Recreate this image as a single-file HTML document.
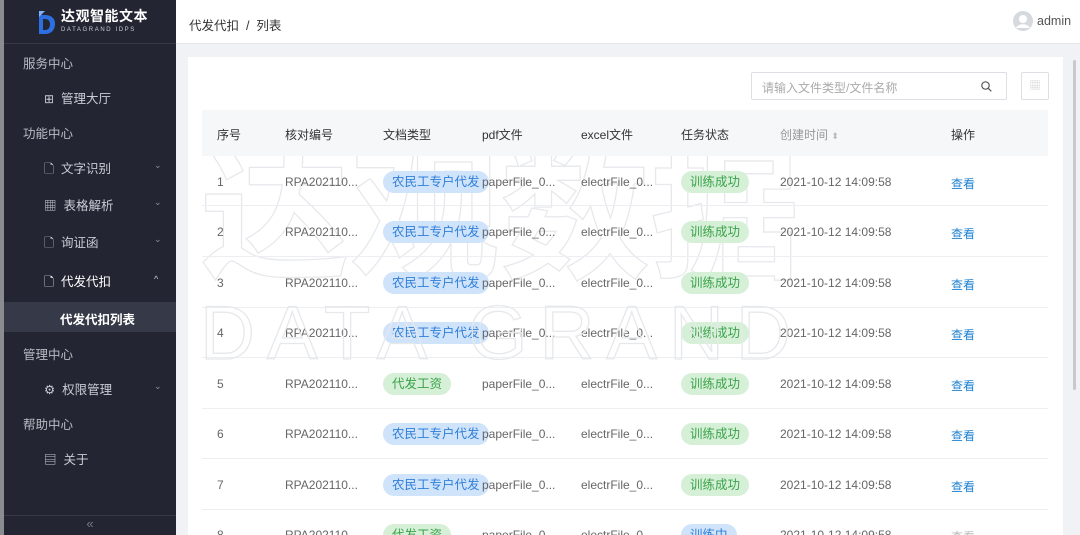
<!DOCTYPE html>
<html><head><meta charset="utf-8"><style>
*{margin:0;padding:0;box-sizing:border-box}
html,body{width:1080px;height:535px;overflow:hidden}
body{font-family:"Liberation Sans","Noto Sans CJK SC",sans-serif;background:#f0f2f5;position:relative;font-size:12px;color:#333}
.side{position:absolute;left:0;top:0;width:176px;height:535px;background:#232632;border-left:4px solid #8a8c90}
.logo{height:44px;border-bottom:1px solid #363a46;position:relative}
.logo .t1{position:absolute;left:57px;top:8px;color:#fff;font-weight:bold;font-size:14px;letter-spacing:0.5px;line-height:16px}
.logo .t2{position:absolute;left:57px;top:26px;color:#c8cbd4;font-size:6px;letter-spacing:1.6px;line-height:8px}
.it{position:absolute;color:#c9ccd4;font-size:12.5px}
.grp{left:19px;color:#b9bcc4}
.sub{left:40px}
.arr{position:absolute;left:150px;color:#8f929a;font-size:9px}
.hl{position:absolute;left:0;top:302px;width:172px;height:30px;background:#363a48}
.bot{position:absolute;left:0;bottom:0;width:172px;height:20px;border-top:1px solid #363a46;color:#777b86;text-align:center;font-size:13px;line-height:16px}
.hdr{position:absolute;left:176px;top:0;width:904px;height:44px;background:#fff;border-bottom:1px solid #e4e6ea}
.card{position:absolute;left:188px;top:57px;width:875px;height:478px;background:#fff}
.th{position:absolute;left:202px;top:110px;width:846px;height:46px;background:#f6f7f9}
.row{position:absolute;left:202px;width:846px;height:50px;border-bottom:1px solid #eceef1}
.c{position:absolute;font-size:12px;color:#666}
.tag{position:absolute;height:22px;line-height:22px;border-radius:11px;padding:0 9px;font-size:12.5px}
.b{background:#cfe3fb;color:#2f7fd8}
.g{background:#d6f0d8;color:#3aa24a}
.lk{color:#1e82d2}
.wm{position:absolute;color:transparent;-webkit-text-stroke:1.3px #e6e8eb;font-family:"Liberation Sans",sans-serif;white-space:nowrap}
</style></head><body>
<div class="side">
 <div class="logo">
  <svg style="position:absolute;left:32px;top:10px" width="20" height="26" viewBox="0 0 20 26"><path d="M3 5 L3 24 L9 24 C16 24 19 19 19 14 C19 8 15 5 9 5 Z" fill="#2d6fe0"/><path d="M7 9 L7 20 L9 20 C13 20 14 17 14 14 C14 11 12 9 9 9 Z" fill="#232632"/><path d="M3 1 L9 1 L3 7Z" fill="#7fb1ff"/></svg>
  <div class="t1">达观智能文本</div><div class="t2">DATAGRAND IDPS</div>
 </div>
 <div class="it grp" style="top:53px">服务中心</div>
 <div class="it sub" style="top:88px"><span style="font-size:12px">⊞</span>&nbsp; 管理大厅</div>
 <div class="it grp" style="top:123px">功能中心</div>
 <div class="it sub" style="top:158px">🗋&nbsp; 文字识别</div><div class="arr" style="top:160px">⌄</div>
 <div class="it sub" style="top:195px">▦&nbsp; 表格解析</div><div class="arr" style="top:197px">⌄</div>
 <div class="it sub" style="top:232px">🗋&nbsp; 询证函</div><div class="arr" style="top:234px">⌄</div>
 <div class="it sub" style="top:271px;color:#fff">🗋&nbsp; 代发代扣</div><div class="arr" style="top:274px;color:#ccc">^</div>
 <div class="hl"></div>
 <div class="it" style="top:309px;left:56px;color:#fff;font-weight:bold">代发代扣列表</div>
 <div class="it grp" style="top:344px">管理中心</div>
 <div class="it sub" style="top:379px">⚙&nbsp; 权限管理</div><div class="arr" style="top:381px">⌄</div>
 <div class="it grp" style="top:414px">帮助中心</div>
 <div class="it sub" style="top:449px">▤&nbsp; 关于</div>
 <div class="bot">«</div>
</div>
<div class="hdr">
 <div style="position:absolute;left:13px;top:15px;font-size:12.5px;color:#333">代发代扣 &nbsp;/&nbsp; 列表</div>
 <svg style="position:absolute;left:837px;top:11px" width="20" height="20" viewBox="0 0 20 20"><circle cx="10" cy="10" r="10" fill="#d6d9de"/><circle cx="10" cy="8" r="4" fill="#fff"/><path d="M3 17 C5 12 15 12 17 17" fill="#fff"/></svg>
 <div style="position:absolute;left:861px;top:14px;font-size:12.5px;color:#555">admin</div>
</div>
<div style="position:absolute;left:1073px;top:60px;width:3px;height:330px;background:#c7c9cc;border-radius:2px"></div>
<div class="card"></div>
<div style="position:absolute;left:751px;top:72px;width:256px;height:28px;border:1px solid #dcdfe4;border-radius:2px;background:#fff"><span style="position:absolute;left:10px;top:6px;color:#aaa;font-size:12px">请输入文件类型/文件名称</span><svg style="position:absolute;right:14px;top:8px" width="11" height="11" viewBox="0 0 11 11"><circle cx="4.5" cy="4.5" r="3.7" fill="none" stroke="#555" stroke-width="1.2"/><path d="M7.3 7.3 L10.3 10.3" stroke="#555" stroke-width="1.2"/></svg></div>
<div style="position:absolute;left:1021px;top:72px;width:28px;height:28px;border:1px solid #dcdfe4;border-radius:2px;color:#ccc;text-align:center;line-height:26px;font-size:11px">▦</div>
<div class="wm" style="left:200px;top:118px;font-size:150px;font-weight:bold;letter-spacing:0px;font-family:'Noto Sans CJK SC',sans-serif;line-height:170px">达观数据</div>
<div class="th"></div>
<div class="c" style="left:217px;top:126px;color:#333">序号</div>
<div class="c" style="left:285px;top:126px;color:#333">核对编号</div>
<div class="c" style="left:383px;top:126px;color:#333">文档类型</div>
<div class="c" style="left:482px;top:126px;color:#333">pdf文件</div>
<div class="c" style="left:581px;top:126px;color:#333">excel文件</div>
<div class="c" style="left:681px;top:126px;color:#333">任务状态</div>
<div class="c" style="left:780px;top:126px;color:#999">创建时间 <span style="color:#bbb;font-size:9px">⬍</span></div>
<div class="c" style="left:951px;top:126px;color:#333">操作</div>
<div class="row" style="top:156px"></div><div class="row" style="top:207px"></div><div class="row" style="top:258px"></div><div class="row" style="top:308px"></div><div class="row" style="top:359px"></div><div class="row" style="top:409px"></div><div class="row" style="top:460px"></div>

<div class="c" style="left:217px;top:175px">1</div><div class="c" style="left:285px;top:175px">RPA202110...</div><div class="tag b" style="left:383px;top:171px">农民工专户代发</div><div class="c" style="left:482px;top:175px">paperFile_0...</div><div class="c" style="left:581px;top:175px">electrFile_0...</div><div class="tag g" style="left:681px;top:171px">训练成功</div><div class="c" style="left:780px;top:175px">2021-10-12 14:09:58</div><div class="c lk" style="left:951px;top:175px">查看</div>
<div class="c" style="left:217px;top:225px">2</div><div class="c" style="left:285px;top:225px">RPA202110...</div><div class="tag b" style="left:383px;top:221px">农民工专户代发</div><div class="c" style="left:482px;top:225px">paperFile_0...</div><div class="c" style="left:581px;top:225px">electrFile_0...</div><div class="tag g" style="left:681px;top:221px">训练成功</div><div class="c" style="left:780px;top:225px">2021-10-12 14:09:58</div><div class="c lk" style="left:951px;top:225px">查看</div>
<div class="c" style="left:217px;top:276px">3</div><div class="c" style="left:285px;top:276px">RPA202110...</div><div class="tag b" style="left:383px;top:272px">农民工专户代发</div><div class="c" style="left:482px;top:276px">paperFile_0...</div><div class="c" style="left:581px;top:276px">electrFile_0...</div><div class="tag g" style="left:681px;top:272px">训练成功</div><div class="c" style="left:780px;top:276px">2021-10-12 14:09:58</div><div class="c lk" style="left:951px;top:276px">查看</div>
<div class="c" style="left:217px;top:326px">4</div><div class="c" style="left:285px;top:326px">RPA202110...</div><div class="tag b" style="left:383px;top:322px">农民工专户代发</div><div class="c" style="left:482px;top:326px">paperFile_0...</div><div class="c" style="left:581px;top:326px">electrFile_0...</div><div class="tag g" style="left:681px;top:322px">训练成功</div><div class="c" style="left:780px;top:326px">2021-10-12 14:09:58</div><div class="c lk" style="left:951px;top:326px">查看</div>
<div class="c" style="left:217px;top:377px">5</div><div class="c" style="left:285px;top:377px">RPA202110...</div><div class="tag g" style="left:383px;top:373px">代发工资</div><div class="c" style="left:482px;top:377px">paperFile_0...</div><div class="c" style="left:581px;top:377px">electrFile_0...</div><div class="tag g" style="left:681px;top:373px">训练成功</div><div class="c" style="left:780px;top:377px">2021-10-12 14:09:58</div><div class="c lk" style="left:951px;top:377px">查看</div>
<div class="c" style="left:217px;top:427px">6</div><div class="c" style="left:285px;top:427px">RPA202110...</div><div class="tag b" style="left:383px;top:423px">农民工专户代发</div><div class="c" style="left:482px;top:427px">paperFile_0...</div><div class="c" style="left:581px;top:427px">electrFile_0...</div><div class="tag g" style="left:681px;top:423px">训练成功</div><div class="c" style="left:780px;top:427px">2021-10-12 14:09:58</div><div class="c lk" style="left:951px;top:427px">查看</div>
<div class="c" style="left:217px;top:478px">7</div><div class="c" style="left:285px;top:478px">RPA202110...</div><div class="tag b" style="left:383px;top:474px">农民工专户代发</div><div class="c" style="left:482px;top:478px">paperFile_0...</div><div class="c" style="left:581px;top:478px">electrFile_0...</div><div class="tag g" style="left:681px;top:474px">训练成功</div><div class="c" style="left:780px;top:478px">2021-10-12 14:09:58</div><div class="c lk" style="left:951px;top:478px">查看</div>
<div class="c" style="left:217px;top:528px">8</div><div class="c" style="left:285px;top:528px">RPA202110...</div><div class="tag g" style="left:383px;top:524px">代发工资</div><div class="c" style="left:482px;top:528px">paperFile_0...</div><div class="c" style="left:581px;top:528px">electrFile_0...</div><div class="tag b" style="left:681px;top:524px">训练中</div><div class="c" style="left:780px;top:528px">2021-10-12 14:09:58</div><div class="c" style="left:951px;top:528px;color:#bbb">查看</div>
<div class="wm" style="left:200px;top:290px;font-size:76px;letter-spacing:12px">DATA GRAND</div>
</body></html>
